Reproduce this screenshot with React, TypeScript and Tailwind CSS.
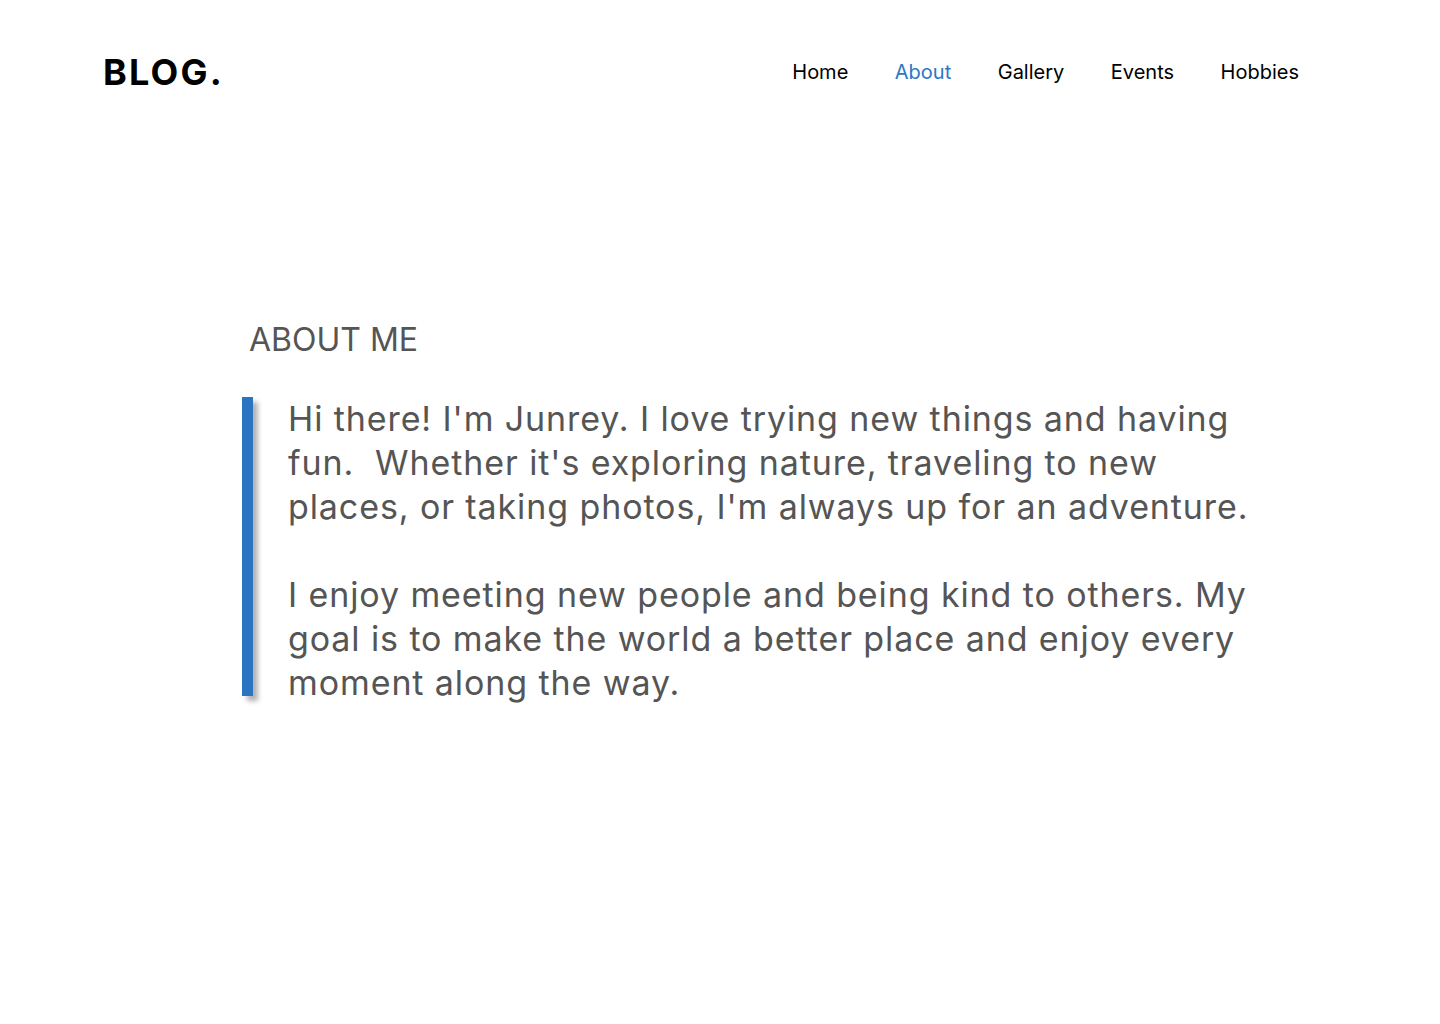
import React from "react";

export default function App() {
  return (
    <div className="min-h-[1024px] w-full bg-white" style={{ fontFamily: "Inter, 'Noto Sans', sans-serif" }}>
      <header className="flex items-center justify-between pl-[103px] pr-[141px] pt-[47px]">
        <div className="text-[36px] font-bold leading-[50px] tracking-[2.2px] text-black">BLOG.</div>
        <nav className="flex items-center gap-[46.5px] text-[20px] leading-[50px] text-black">
          <a className="cursor-pointer">Home</a>
          <a className="cursor-pointer text-[#2b78c5]">About</a>
          <a className="cursor-pointer">Gallery</a>
          <a className="cursor-pointer">Events</a>
          <a className="cursor-pointer">Hobbies</a>
        </nav>
      </header>
      <section className="pl-[242px] pt-[223px]">
        <h2 className="pl-[7px] text-[32px] font-normal leading-[40px] text-[#555555]">ABOUT ME</h2>
        <div className="mt-[37px] flex items-start">
          <div className="h-[299px] w-[11px] shrink-0 bg-[#2a74c2] shadow-[5px_5px_5px_rgba(0,0,0,0.3)]" />
          <p className="mt-0 ml-[35px] w-[968px] text-[34px] leading-[44px] tracking-[0.9px] text-[#555555]">
            Hi there! I'm Junrey. I love trying new things and having fun.&nbsp; Whether it's exploring nature, traveling to new places, or taking photos, I'm always up for an adventure.
            <br />
            <br />
            I enjoy meeting new people and being kind to others. My goal is to make the world a better place and enjoy every moment along the way.
          </p>
        </div>
      </section>
    </div>
  );
}
